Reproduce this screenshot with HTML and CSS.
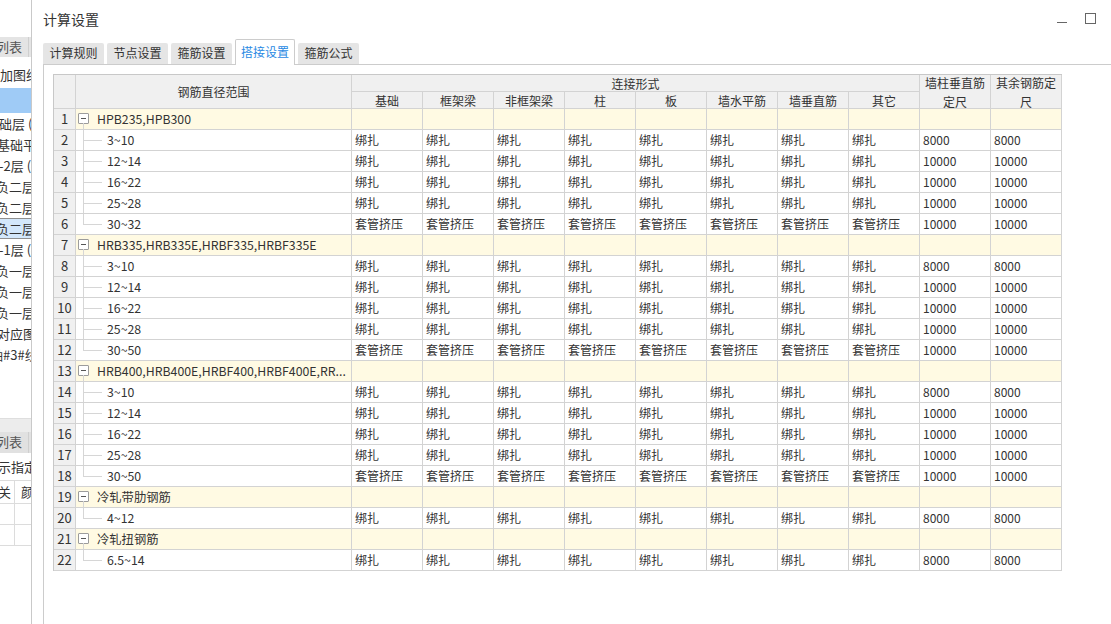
FILE: index.html
```html
<!DOCTYPE html>
<html lang="zh-CN">
<head>
<meta charset="utf-8">
<title>计算设置</title>
<link rel="stylesheet" href="styles.css">
</head>
<body>
<aside class="side">
  <div class="s-blank"></div>
  <div class="s-tabband"><span class="s-tab">列表</span></div>
  <div class="s-item">加图纸</div>
  <div class="s-blue"></div>
  <div class="s-row i1">础层 (-</div>
  <div class="s-row i2">基础平</div>
  <div class="s-row i1">-2层 (-</div>
  <div class="s-row i3">负二层</div>
  <div class="s-row i3">负二层</div>
  <div class="s-row i3 s-sel">负二层</div>
  <div class="s-row i1">-1层 (-</div>
  <div class="s-row i3">负一层</div>
  <div class="s-row i3">负一层</div>
  <div class="s-row i3">负一层</div>
  <div class="s-row i2">对应图</div>
  <div class="s-row i9">轴#3#线</div>
  <div class="s-gap"></div>
  <div class="s-band"></div>
  <div class="s-tabband2"><span class="s-tab">列表</span></div>
  <div class="s-hint">示指定</div>
  <div class="s-grid">
    <div class="s-gr s-gh"><span class="s-c1">关</span><span class="s-c2">颜</span></div>
    <div class="s-gr"><span class="s-c1"></span><span class="s-c2"></span></div>
    <div class="s-gr"><span class="s-c1"></span><span class="s-c2"></span></div>
  </div>
</aside>

<main class="dialog">
  <header class="titlebar">
    <h1 class="title">计算设置</h1>
    <div class="wincontrols">
      <span class="w-min"></span>
      <span class="w-max"></span>
    </div>
  </header>

  <nav class="tabs">
    <span class="tab">计算规则</span>
    <span class="tab">节点设置</span>
    <span class="tab">箍筋设置</span>
    <span class="tab active">搭接设置</span>
    <span class="tab">箍筋公式</span>
  </nav>

  <section class="panel">
    <div class="grid">
      <div class="hc span2"></div>
      <div class="hc span2">钢筋直径范围</div>
      <div class="hc conn">连接形式</div>
      <div class="hc span2 wrap">墙柱垂直筋定尺</div>
      <div class="hc span2 wrap">其余钢筋定尺</div>
      <div class="hc">基础</div>
      <div class="hc">框架梁</div>
      <div class="hc">非框架梁</div>
      <div class="hc">柱</div>
      <div class="hc">板</div>
      <div class="hc">墙水平筋</div>
      <div class="hc">墙垂直筋</div>
      <div class="hc">其它</div>

      <!-- 1 -->
      <div class="row grp"><div class="rn">1</div><div class="nm"><span class="tog"></span>HPB235,HPB300</div><div class="c"></div><div class="c"></div><div class="c"></div><div class="c"></div><div class="c"></div><div class="c"></div><div class="c"></div><div class="c"></div><div class="c"></div><div class="c"></div></div>
      <div class="row"><div class="rn">2</div><div class="nm ch">3~10</div><div class="c">绑扎</div><div class="c">绑扎</div><div class="c">绑扎</div><div class="c">绑扎</div><div class="c">绑扎</div><div class="c">绑扎</div><div class="c">绑扎</div><div class="c">绑扎</div><div class="c">8000</div><div class="c">8000</div></div>
      <div class="row"><div class="rn">3</div><div class="nm ch">12~14</div><div class="c">绑扎</div><div class="c">绑扎</div><div class="c">绑扎</div><div class="c">绑扎</div><div class="c">绑扎</div><div class="c">绑扎</div><div class="c">绑扎</div><div class="c">绑扎</div><div class="c">10000</div><div class="c">10000</div></div>
      <div class="row"><div class="rn">4</div><div class="nm ch">16~22</div><div class="c">绑扎</div><div class="c">绑扎</div><div class="c">绑扎</div><div class="c">绑扎</div><div class="c">绑扎</div><div class="c">绑扎</div><div class="c">绑扎</div><div class="c">绑扎</div><div class="c">10000</div><div class="c">10000</div></div>
      <div class="row"><div class="rn">5</div><div class="nm ch">25~28</div><div class="c">绑扎</div><div class="c">绑扎</div><div class="c">绑扎</div><div class="c">绑扎</div><div class="c">绑扎</div><div class="c">绑扎</div><div class="c">绑扎</div><div class="c">绑扎</div><div class="c">10000</div><div class="c">10000</div></div>
      <div class="row"><div class="rn">6</div><div class="nm ch last">30~32</div><div class="c">套管挤压</div><div class="c">套管挤压</div><div class="c">套管挤压</div><div class="c">套管挤压</div><div class="c">套管挤压</div><div class="c">套管挤压</div><div class="c">套管挤压</div><div class="c">套管挤压</div><div class="c">10000</div><div class="c">10000</div></div>

      <!-- 7 -->
      <div class="row grp"><div class="rn">7</div><div class="nm"><span class="tog"></span>HRB335,HRB335E,HRBF335,HRBF335E</div><div class="c"></div><div class="c"></div><div class="c"></div><div class="c"></div><div class="c"></div><div class="c"></div><div class="c"></div><div class="c"></div><div class="c"></div><div class="c"></div></div>
      <div class="row"><div class="rn">8</div><div class="nm ch">3~10</div><div class="c">绑扎</div><div class="c">绑扎</div><div class="c">绑扎</div><div class="c">绑扎</div><div class="c">绑扎</div><div class="c">绑扎</div><div class="c">绑扎</div><div class="c">绑扎</div><div class="c">8000</div><div class="c">8000</div></div>
      <div class="row"><div class="rn">9</div><div class="nm ch">12~14</div><div class="c">绑扎</div><div class="c">绑扎</div><div class="c">绑扎</div><div class="c">绑扎</div><div class="c">绑扎</div><div class="c">绑扎</div><div class="c">绑扎</div><div class="c">绑扎</div><div class="c">10000</div><div class="c">10000</div></div>
      <div class="row"><div class="rn">10</div><div class="nm ch">16~22</div><div class="c">绑扎</div><div class="c">绑扎</div><div class="c">绑扎</div><div class="c">绑扎</div><div class="c">绑扎</div><div class="c">绑扎</div><div class="c">绑扎</div><div class="c">绑扎</div><div class="c">10000</div><div class="c">10000</div></div>
      <div class="row"><div class="rn">11</div><div class="nm ch">25~28</div><div class="c">绑扎</div><div class="c">绑扎</div><div class="c">绑扎</div><div class="c">绑扎</div><div class="c">绑扎</div><div class="c">绑扎</div><div class="c">绑扎</div><div class="c">绑扎</div><div class="c">10000</div><div class="c">10000</div></div>
      <div class="row"><div class="rn">12</div><div class="nm ch last">30~50</div><div class="c">套管挤压</div><div class="c">套管挤压</div><div class="c">套管挤压</div><div class="c">套管挤压</div><div class="c">套管挤压</div><div class="c">套管挤压</div><div class="c">套管挤压</div><div class="c">套管挤压</div><div class="c">10000</div><div class="c">10000</div></div>

      <!-- 13 -->
      <div class="row grp"><div class="rn">13</div><div class="nm"><span class="tog"></span>HRB400,HRB400E,HRBF400,HRBF400E,RR...</div><div class="c"></div><div class="c"></div><div class="c"></div><div class="c"></div><div class="c"></div><div class="c"></div><div class="c"></div><div class="c"></div><div class="c"></div><div class="c"></div></div>
      <div class="row"><div class="rn">14</div><div class="nm ch">3~10</div><div class="c">绑扎</div><div class="c">绑扎</div><div class="c">绑扎</div><div class="c">绑扎</div><div class="c">绑扎</div><div class="c">绑扎</div><div class="c">绑扎</div><div class="c">绑扎</div><div class="c">8000</div><div class="c">8000</div></div>
      <div class="row"><div class="rn">15</div><div class="nm ch">12~14</div><div class="c">绑扎</div><div class="c">绑扎</div><div class="c">绑扎</div><div class="c">绑扎</div><div class="c">绑扎</div><div class="c">绑扎</div><div class="c">绑扎</div><div class="c">绑扎</div><div class="c">10000</div><div class="c">10000</div></div>
      <div class="row"><div class="rn">16</div><div class="nm ch">16~22</div><div class="c">绑扎</div><div class="c">绑扎</div><div class="c">绑扎</div><div class="c">绑扎</div><div class="c">绑扎</div><div class="c">绑扎</div><div class="c">绑扎</div><div class="c">绑扎</div><div class="c">10000</div><div class="c">10000</div></div>
      <div class="row"><div class="rn">17</div><div class="nm ch">25~28</div><div class="c">绑扎</div><div class="c">绑扎</div><div class="c">绑扎</div><div class="c">绑扎</div><div class="c">绑扎</div><div class="c">绑扎</div><div class="c">绑扎</div><div class="c">绑扎</div><div class="c">10000</div><div class="c">10000</div></div>
      <div class="row"><div class="rn">18</div><div class="nm ch last">30~50</div><div class="c">套管挤压</div><div class="c">套管挤压</div><div class="c">套管挤压</div><div class="c">套管挤压</div><div class="c">套管挤压</div><div class="c">套管挤压</div><div class="c">套管挤压</div><div class="c">套管挤压</div><div class="c">10000</div><div class="c">10000</div></div>

      <!-- 19 -->
      <div class="row grp"><div class="rn">19</div><div class="nm"><span class="tog"></span>冷轧带肋钢筋</div><div class="c"></div><div class="c"></div><div class="c"></div><div class="c"></div><div class="c"></div><div class="c"></div><div class="c"></div><div class="c"></div><div class="c"></div><div class="c"></div></div>
      <div class="row"><div class="rn">20</div><div class="nm ch last">4~12</div><div class="c">绑扎</div><div class="c">绑扎</div><div class="c">绑扎</div><div class="c">绑扎</div><div class="c">绑扎</div><div class="c">绑扎</div><div class="c">绑扎</div><div class="c">绑扎</div><div class="c">8000</div><div class="c">8000</div></div>

      <!-- 21 -->
      <div class="row grp"><div class="rn">21</div><div class="nm"><span class="tog"></span>冷轧扭钢筋</div><div class="c"></div><div class="c"></div><div class="c"></div><div class="c"></div><div class="c"></div><div class="c"></div><div class="c"></div><div class="c"></div><div class="c"></div><div class="c"></div></div>
      <div class="row"><div class="rn">22</div><div class="nm ch last">6.5~14</div><div class="c">绑扎</div><div class="c">绑扎</div><div class="c">绑扎</div><div class="c">绑扎</div><div class="c">绑扎</div><div class="c">绑扎</div><div class="c">绑扎</div><div class="c">绑扎</div><div class="c">8000</div><div class="c">8000</div></div>
    </div>
  </section>
</main>
</body>
</html>
```

FILE: styles.css
```css
html, body {
  margin: 0;
  padding: 0;
  width: 1111px;
  height: 624px;
  overflow: hidden;
  background: #ffffff;
}

body {
  display: flex;
  font-family: "Noto Sans CJK SC", "Noto Sans", sans-serif;
  font-size: 12px;
  color: #333333;
}

/* ---------- left side panel (clipped) ---------- */
.side {
  flex: none;
  width: 31px;
  height: 624px;
  border-right: 1px solid #c9c9c9;
  overflow: hidden;
  white-space: nowrap;
  display: flex;
  flex-direction: column;
}

.s-blank { height: 37px; flex: none; }

.s-tabband,
.s-tabband2 {
  flex: none;
  height: 20px;
  background: #e4e4e4;
  display: flex;
}

.s-tabband2 {
  height: 21px;
  background: #e1e1e1;
}

.s-tab {
  width: 28px;
  border-right: 1px solid #cfcfcf;
  line-height: 20px;
  text-indent: -4px;
  color: #555555;
  overflow: hidden;
  font-size: 13px;
}

.s-item {
  flex: none;
  height: 31px;
  box-sizing: border-box;
  padding-top: 8px;
  line-height: 20px;
  font-size: 13px;
}

.s-blue {
  flex: none;
  height: 25px;
  background: #9fcbf6;
}

.s-row {
  flex: none;
  height: 21px;
  line-height: 21px;
  box-sizing: border-box;
  font-size: 13px;
}

.i1 { text-indent: -1px; }
.i2 { text-indent: -3px; }
.i3 { text-indent: -4px; }
.i9 { text-indent: -10px; }

.s-sel {
  background: #d3e7fb;
  border-top: 1px solid #8f8f8f;
  border-bottom: 1px solid #8f8f8f;
  line-height: 19px;
}

.s-gap { flex: none; height: 53px; }

.s-band {
  flex: none;
  height: 14px;
  background: #ececec;
  border-top: 1px solid #dedede;
  box-sizing: border-box;
}

.s-hint {
  flex: none;
  height: 27px;
  line-height: 27px;
  text-indent: -2px;
  font-size: 13px;
}

.s-grid {
  flex: none;
  border-top: 1px solid #dcdcdc;
}

.s-gr {
  display: flex;
  height: 20px;
  border-bottom: 1px solid #dcdcdc;
  line-height: 20px;
}

.s-gh {
  height: 22px;
  line-height: 22px;
}

.s-c1 {
  width: 14px;
  flex: none;
  border-right: 1px solid #dcdcdc;
  text-indent: -2px;
  overflow: hidden;
  font-size: 13px;
}

.s-c2 {
  padding-left: 6px;
  font-size: 13px;
}

/* ---------- dialog ---------- */
.dialog {
  flex: 1;
  margin-left: 11px;
  display: flex;
  flex-direction: column;
  min-width: 0;
}

.titlebar {
  flex: none;
  height: 39px;
  display: flex;
  align-items: flex-start;
  justify-content: space-between;
}

.title {
  margin: 9px 0 0 0;
  font-size: 14px;
  font-weight: normal;
  line-height: 20px;
  color: #333333;
}

.wincontrols {
  display: flex;
  align-items: flex-start;
  margin-top: 13px;
  margin-right: 15px;
  gap: 18px;
}

.w-min {
  width: 10px;
  height: 9px;
  border-bottom: 1px solid #666666;
}

.w-max {
  width: 11px;
  height: 11px;
  box-sizing: border-box;
  border: 1px solid #666666;
}

/* ---------- tabs ---------- */
.tabs {
  flex: none;
  height: 25px;
  display: flex;
  align-items: flex-end;
  gap: 3px;
  border-bottom: 1px solid #cccccc;
}

.tab {
  width: 61px;
  height: 21px;
  box-sizing: border-box;
  background: #e5e5e5;
  color: #333333;
  text-align: center;
  line-height: 20px;
  font-size: 12px;
  border-radius: 2px 2px 0 0;
}

.tab.active {
  width: 60px;
  height: 26px;
  margin-bottom: -1px;
  background: #ffffff;
  border: 1px solid #cccccc;
  border-bottom: none;
  color: #2889e3;
  line-height: 24px;
  position: relative;
}

/* ---------- panel & grid ---------- */
.panel {
  flex: 1;
  border-left: 1px solid #cccccc;
  padding: 9px 0 0 9px;
}

.grid {
  display: grid;
  grid-template-columns: 22px 276px repeat(10, 71px);
  grid-template-rows: 17px 17px repeat(22, 21px);
  width: max-content;
  border-left: 1px solid #c8c8c8;
  border-top: 1px solid #c8c8c8;
}

.grid > div,
.row > div {
  box-sizing: border-box;
  border-right: 1px solid #d3d3d3;
  border-bottom: 1px solid #d3d3d3;
  min-width: 0;
}

.row { display: contents; }

.hc {
  background: #f0f0f0;
  display: flex;
  align-items: center;
  justify-content: center;
  text-align: center;
  line-height: 17px;
  color: #333333;
}

.span2 { grid-row: span 2; }
.conn { grid-column: span 8; }

.wrap {
  line-height: 19px;
  padding: 0 2px;
}

.rn {
  background: #f0f0f0;
  text-align: center;
  line-height: 20px;
  font-size: 13px;
  color: #333333;
}

.c {
  padding-left: 3px;
  line-height: 20px;
  white-space: nowrap;
  overflow: hidden;
}

.grp > .nm,
.grp > .c {
  background: #fffae3;
}

.nm {
  position: relative;
  display: flex;
  align-items: center;
  white-space: nowrap;
  overflow: hidden;
  line-height: 20px;
  font-size: 12.3px;
}

.grp > .nm { padding-left: 2px; }

.tog {
  flex: none;
  position: relative;
  width: 11px;
  height: 11px;
  box-sizing: border-box;
  border: 1px solid #9c9c9c;
  border-radius: 1px;
  background: #ffffff;
  margin-right: 8px;
  margin-top: -2px;
}

.tog::before {
  content: "";
  position: absolute;
  left: 2px;
  top: 4px;
  width: 5px;
  height: 1px;
  background: #555555;
}

.grp > .nm::after {
  content: "";
  position: absolute;
  left: 7px;
  top: 14px;
  bottom: -1px;
  border-left: 1px solid #d6d6d6;
}

.nm.ch { padding-left: 31px; }

.nm.ch::before {
  content: "";
  position: absolute;
  left: 7px;
  top: -1px;
  bottom: -1px;
  border-left: 1px solid #d6d6d6;
}

.nm.ch.last::before {
  bottom: auto;
  height: 11px;
}

.nm.ch::after {
  content: "";
  position: absolute;
  left: 7px;
  top: 10px;
  width: 19px;
  border-top: 1px solid #d6d6d6;
}
```
